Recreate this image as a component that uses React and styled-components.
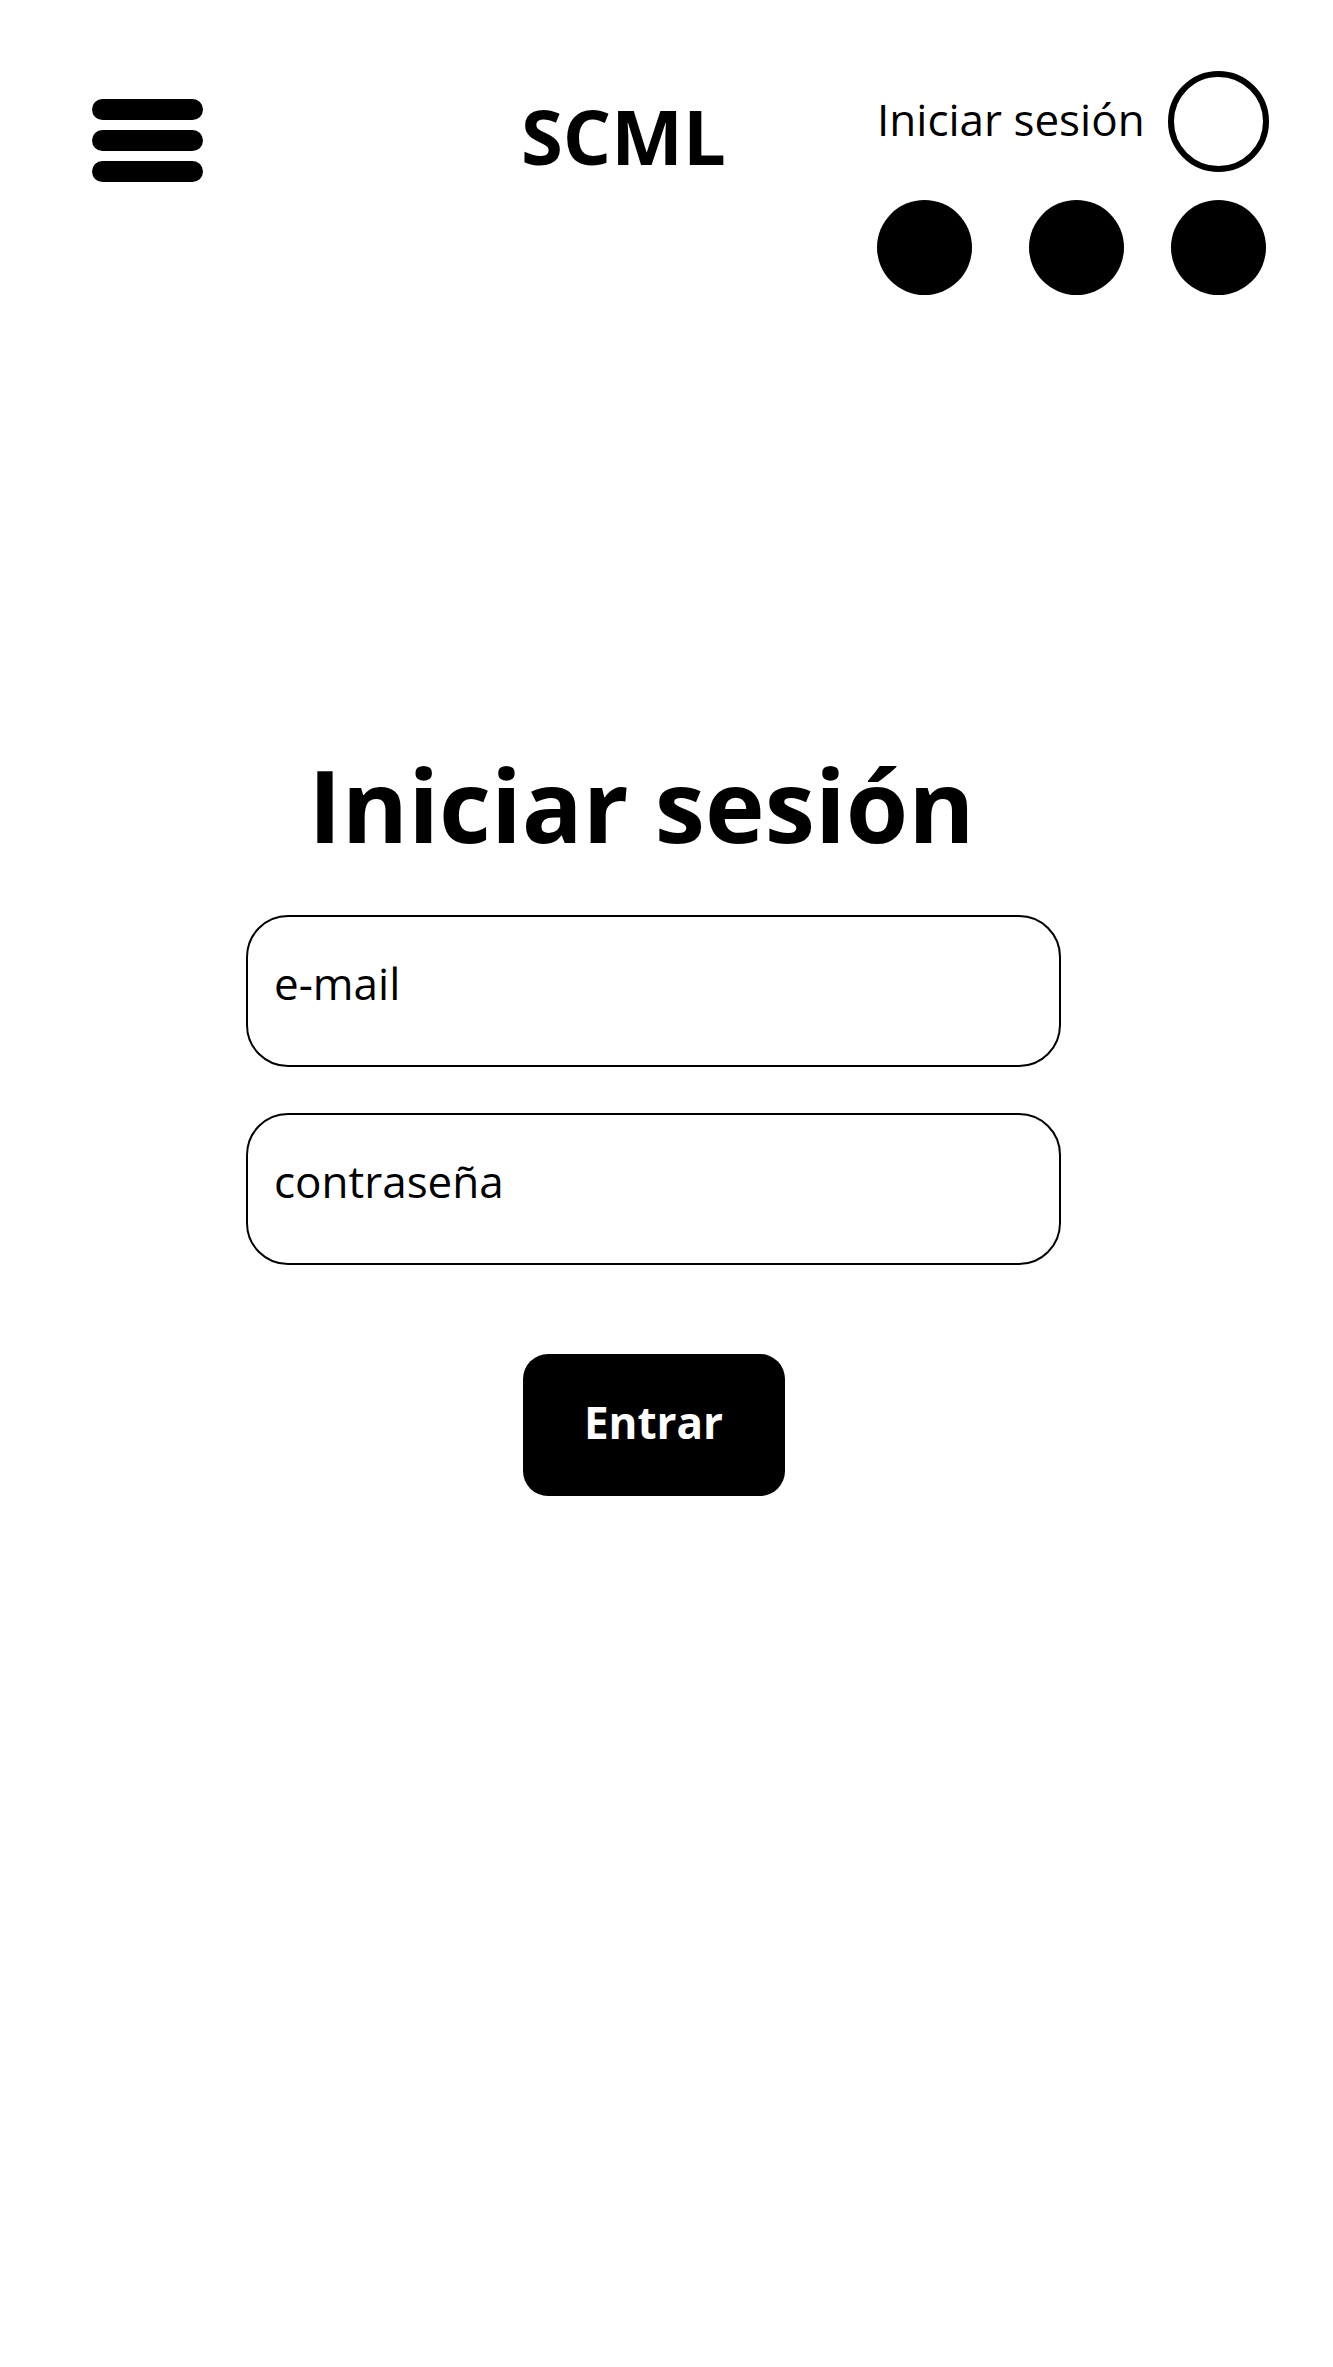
import React from "react";
import styled, { createGlobalStyle } from "styled-components";

const GlobalStyle = createGlobalStyle`
  *, *::before, *::after { box-sizing: border-box; }
  body {
    margin: 0;
    background: #fff;
    color: #000;
    font-family: "Open Sans", "Noto Sans", sans-serif;
  }
`;

const Header = styled.header`
  display: grid;
  grid-template-columns: 429fr 356fr 392px;
  align-items: start;
  padding: 71px 64px 0 92px;
`;

const MenuButton = styled.button`
  display: flex;
  flex-direction: column;
  gap: 10px;
  width: 111px;
  margin-top: 28px;
  padding: 0;
  border: 0;
  background: none;
  cursor: pointer;
`;

const MenuBar = styled.span`
  width: 100%;
  height: 21px;
  border-radius: 11px;
  background: #000;
`;

const Brand = styled.a`
  margin-top: 15px;
  color: inherit;
  font-size: 76px;
  font-weight: 700;
  line-height: 100px;
  text-decoration: none;
`;

const Account = styled.div`
  display: flex;
  flex-direction: column;
  gap: 28px;
`;

const AccountLink = styled.a`
  display: flex;
  align-items: center;
  justify-content: space-between;
  color: inherit;
  font-size: 44px;
  line-height: 60px;
  text-decoration: none;
  white-space: nowrap;
`;

const AccountLabel = styled.span`
  padding-bottom: 6px;
`;

const Avatar = styled.span`
  width: 101px;
  height: 101px;
  border: 6px solid #000;
  border-radius: 50%;
`;

const Shortcuts = styled.nav`
  display: grid;
  grid-template-columns: 152px 142px 95px;
`;

const Shortcut = styled.button`
  width: 95px;
  height: 95px;
  padding: 0;
  border: 0;
  border-radius: 50%;
  background: #000;
  cursor: pointer;
`;

const Main = styled.main`
  padding: 444px 272px 120px 246px;
`;

const Form = styled.form`
  display: flex;
  flex-direction: column;
  align-items: center;
  gap: 46px;
`;

const Heading = styled.h1`
  margin: 0;
  padding-right: 24px;
  font-size: 101px;
  font-weight: 700;
  line-height: 130px;
  white-space: nowrap;
`;

const Field = styled.input`
  width: 100%;
  height: 152px;
  padding: 0 26px 16px;
  border: 2px solid #000;
  border-radius: 42px;
  background: #fff;
  color: #000;
  font-family: inherit;
  font-size: 44px;

  &::placeholder {
    color: #000;
    opacity: 1;
  }
`;

const Submit = styled.button`
  width: 262px;
  height: 142px;
  margin-top: 43px;
  padding: 0 0 6px;
  border: 0;
  border-radius: 25px;
  background: #000;
  color: #fff;
  font-family: inherit;
  font-size: 44px;
  font-weight: 700;
  cursor: pointer;
`;

export default function App() {
  return (
    <>
      <GlobalStyle />
      <Header>
        <MenuButton type="button" aria-label="Menú">
          <MenuBar />
          <MenuBar />
          <MenuBar />
        </MenuButton>
        <Brand href="#">SCML</Brand>
        <Account>
          <AccountLink href="#login">
            <AccountLabel>Iniciar sesión</AccountLabel>
            <Avatar />
          </AccountLink>
          <Shortcuts aria-label="Accesos directos">
            <Shortcut type="button" aria-label="Acceso 1" />
            <Shortcut type="button" aria-label="Acceso 2" />
            <Shortcut type="button" aria-label="Acceso 3" />
          </Shortcuts>
        </Account>
      </Header>
      <Main>
        <Form id="login">
          <Heading>Iniciar sesión</Heading>
          <Field type="email" name="email" placeholder="e-mail" aria-label="e-mail" />
          <Field
            type="password"
            name="password"
            placeholder="contraseña"
            aria-label="contraseña"
          />
          <Submit type="submit">Entrar</Submit>
        </Form>
      </Main>
    </>
  );
}
